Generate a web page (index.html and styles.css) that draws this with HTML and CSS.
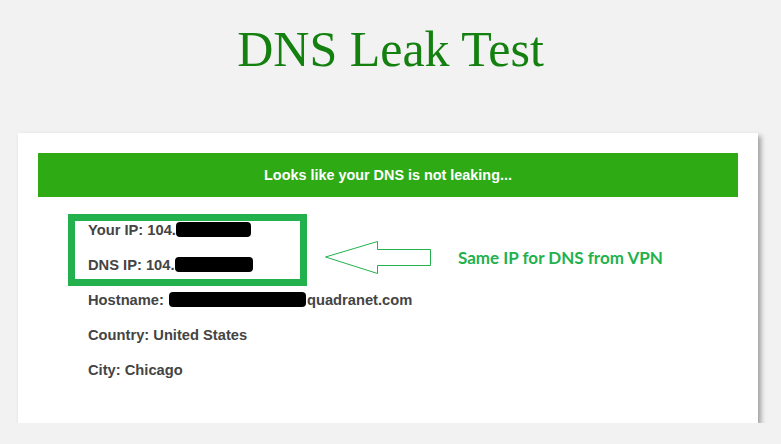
FILE: index.html
```html
<!DOCTYPE html>
<html lang="en">
<head>
  <meta charset="UTF-8" />
  <meta name="viewport" content="width=device-width, initial-scale=1.0" />
  <title>DNS Leak Test</title>
  <link rel="stylesheet" href="styles.css">
</head>
<body>
  <h1 class="title">DNS Leak Test</h1>

  <div class="card">
    <div class="status">Looks like your DNS is not leaking...</div>

    <ul class="info">
      <li>Your IP: 104.<span class="redact redact-ip"></span></li>
      <li>DNS IP: 104.<span class="redact redact-dns"></span></li>
      <li>Hostname: <span class="redact redact-host"></span>quadranet.com</li>
      <li>Country: United States</li>
      <li>City: Chicago</li>
    </ul>

    <!-- annotation drawn over the screenshot -->
    <div class="mark-box"></div>
    <svg class="mark-arrow" width="108" height="35" viewBox="0 0 108 35">
      <polygon points="1.5,17 53.5,1.5 53.5,9.5 106.5,9.5 106.5,25.5 53.5,25.5 53.5,33.5"
               fill="none" stroke="#22b14c" stroke-width="1" />
    </svg>
    <div class="mark-note">Same IP for DNS from VPN</div>
  </div>
</body>
</html>
```

FILE: styles.css
```css
body {
  margin: 0;
  background: #f2f2f2;
  font-family: 'Liberation Sans', Arial, sans-serif;
}
.title {
  margin: 0;
  padding-top: 21px;
  height: 112px;
  box-sizing: border-box;
  text-align: center;
  font-family: 'Liberation Serif', 'Times New Roman', serif;
  font-weight: normal;
  font-size: 50px;
  line-height: 56px;
  color: #13800f;
}
.card {
  position: relative;
  width: 740px;
  margin: 21px 0 0 18px;
  padding: 20px 20px 35px;
  box-sizing: border-box;
  background: #fff;
  box-shadow: 3px 3px 5px rgba(0,0,0,0.35);
}
.status {
  height: 44px;
  line-height: 44px;
  background: #2daa14;
  color: #fff;
  text-align: center;
  font-weight: bold;
  font-size: 14.4px;
}
.info {
  list-style: none;
  margin: 16px 0 0;
  padding: 0 0 0 50px;
  color: #444;
  font-weight: bold;
  font-size: 14.7px;
}
.info li {
  height: 35px;
  line-height: 35px;
}
.redact {
  display: inline-block;
  background: #000;
  vertical-align: middle;
  border-radius: 4px;
}
.redact-ip {
  width: 75px;
  height: 15px;
  margin-top: -3px;
}
.redact-dns {
  width: 78px;
  height: 15px;
  margin-top: -3px;
}
.redact-host {
  width: 137px;
  height: 15px;
  margin: -3px 1px 0 1px;
}
.mark-box {
  position: absolute;
  left: 50px;
  top: 81px;
  width: 239px;
  height: 72px;
  box-sizing: border-box;
  border: 7px solid #22b14c;
}
.mark-arrow {
  position: absolute;
  left: 306px;
  top: 107px;
}
.mark-note {
  position: absolute;
  left: 440px;
  top: 114px;
  font-family: Lato, 'Open Sans', sans-serif;
  font-weight: bold;
  font-size: 17px;
  color: #22b14c;
}
```
